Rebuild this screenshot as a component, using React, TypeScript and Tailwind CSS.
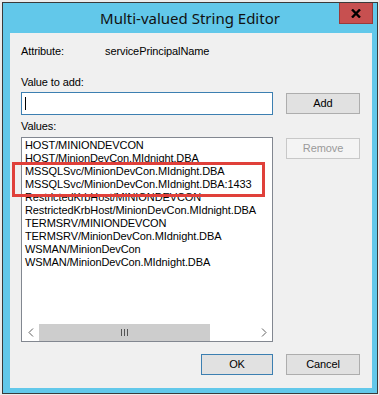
import React from "react";

const items = [
  "HOST/MINIONDEVCON",
  "HOST/MinionDevCon.MIdnight.DBA",
  "MSSQLSvc/MinionDevCon.MIdnight.DBA",
  "MSSQLSvc/MinionDevCon.MIdnight.DBA:1433",
  "RestrictedKrbHost/MINIONDEVCON",
  "RestrictedKrbHost/MinionDevCon.MIdnight.DBA",
  "TERMSRV/MINIONDEVCON",
  "TERMSRV/MinionDevCon.MIdnight.DBA",
  "WSMAN/MinionDevCon",
  "WSMAN/MinionDevCon.MIdnight.DBA",
];

export default function App() {
  return (
    <div
      className="w-[379px] h-[395px] bg-[#ececec] overflow-hidden pt-[2px] pl-[2px]"
      style={{ fontFamily: '"Liberation Sans", Arial, sans-serif' }}
    >
      <div className="w-[376px] h-[392px] border border-[#3a3a3a] bg-[#62c8ea] flex flex-col">
        {/* Title bar */}
        <div className="relative h-[30px] flex items-center justify-center">
          <span
            className="text-[15px] text-[#111] mt-[1px]"
            style={{ fontFamily: '"Noto Sans", "Open Sans", sans-serif' }}
          >
            Multi-valued String Editor
          </span>
          <div className="absolute top-0 right-[4px] w-[34px] h-[21px] bg-[#c75050] border border-[#9a3a3a] border-t-0 flex items-center justify-center">
            <svg width="10" height="9" viewBox="0 0 10 9">
              <path d="M1 0.5 L9 8.5 M9 0.5 L1 8.5" stroke="#000" strokeWidth="2.4" />
            </svg>
          </div>
        </div>
        {/* Client */}
        <div className="relative ml-[7px] w-[362px] h-[355px] bg-[#f0f0f0] pl-[11px] pt-[12px] text-[11px] tracking-[-0.1px] text-black leading-[13px]">
          <div className="flex h-[13px]">
            <span className="w-[84px]">Attribute:</span>
            <span>servicePrincipalName</span>
          </div>
          <div className="mt-[18px] h-[13px]">Value to add:</div>
          <div className="mt-[3px] flex items-start">
            <div className="w-[252px] h-[23px] bg-white border border-[#3c7fb1] relative">
              <div className="absolute left-[3px] top-[4px] w-[1px] h-[13px] bg-black" />
            </div>
            <div className="ml-[13px] mt-[1px] w-[74px] h-[21px] bg-[#e1e1e1] border border-[#adadad] flex items-center justify-center">
              Add
            </div>
          </div>
          <div className="mt-[5px] h-[13px]">Values:</div>
          <div className="mt-[4px] flex items-start">
            <div className="w-[252px] h-[205px] bg-white border border-[#828790] flex flex-col">
              <div className="flex-1 pl-[3px] pt-[1px] whitespace-nowrap overflow-hidden">
                {items.map((t) => (
                  <div key={t} className="h-[13px]">
                    {t}
                  </div>
                ))}
              </div>
              <div className="h-[17px] flex bg-white">
                <div className="w-[17px] h-full flex items-center justify-center">
                  <svg width="6" height="9" viewBox="0 0 6 9">
                    <path d="M5 0.5 L1 4.5 L5 8.5" stroke="#606060" fill="none" strokeWidth="1" />
                  </svg>
                </div>
                <div className="w-[171px] h-full bg-[#cdcdcd] flex items-center justify-center">
                  <div className="flex gap-[2px]">
                    <div className="w-[1px] h-[7px] bg-[#555]" />
                    <div className="w-[1px] h-[7px] bg-[#555]" />
                    <div className="w-[1px] h-[7px] bg-[#555]" />
                  </div>
                </div>
                <div className="flex-1 h-full" />
                <div className="w-[17px] h-full flex items-center justify-center">
                  <svg width="6" height="9" viewBox="0 0 6 9">
                    <path d="M1 0.5 L5 4.5 L1 8.5" stroke="#606060" fill="none" strokeWidth="1" />
                  </svg>
                </div>
              </div>
            </div>
            <div className="ml-[13px] mt-[1px] w-[74px] h-[21px] bg-[#f4f4f4] border border-[#c8c8c8] text-[#9a9a9a] flex items-center justify-center">
              Remove
            </div>
          </div>
          <div className="mt-[12px] ml-[180px] flex gap-[13px]">
            <div className="w-[72px] h-[21px] bg-[#e1e1e1] border border-[#3c7fb1] flex items-center justify-center">
              OK
            </div>
            <div className="w-[74px] h-[21px] bg-[#e1e1e1] border border-[#adadad] flex items-center justify-center">
              Cancel
            </div>
          </div>
          {/* Red highlight overlay */}
          <div className="absolute left-[2px] top-[129px] w-[253px] h-[35px] border-[3px] border-[#e0403a]" />
        </div>
      </div>
    </div>
  );
}
